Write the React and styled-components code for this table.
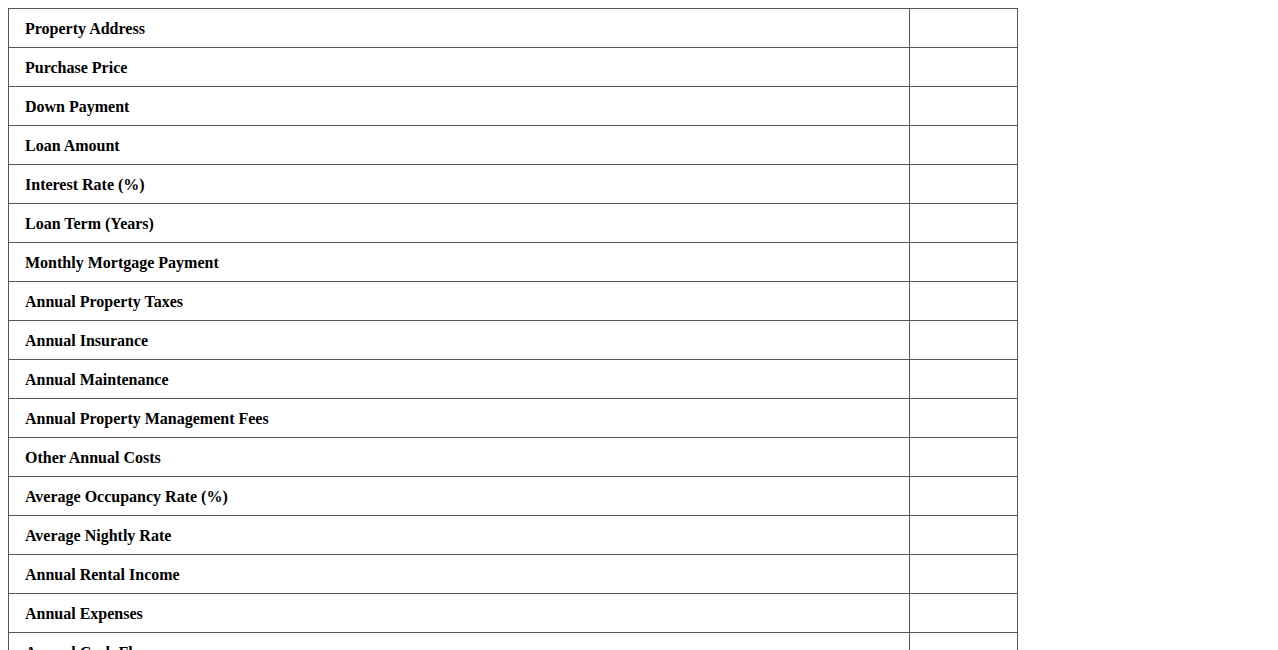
import React from 'react'
import styled, { createGlobalStyle } from 'styled-components'

const GlobalStyle = createGlobalStyle`
  body {
    margin: 8px;
    font-family: "Liberation Serif", "Times New Roman", serif;
    background: #fff;
    color: #000;
  }
`

const rows = [
  'Property Address',
  'Purchase Price',
  'Down Payment',
  'Loan Amount',
  'Interest Rate (%)',
  'Loan Term (Years)',
  'Monthly Mortgage Payment',
  'Annual Property Taxes',
  'Annual Insurance',
  'Annual Maintenance',
  'Annual Property Management Fees',
  'Other Annual Costs',
  'Average Occupancy Rate (%)',
  'Average Nightly Rate',
  'Annual Rental Income',
  'Annual Expenses',
  'Annual Cash Flow',
  'Cash on Cash Return (%)',
]

function App() {
  return (
    <>
      <GlobalStyle />
      <Table>
        <tbody>
          {rows.map((label) => (
            <tr key={label}>
              <Label>{label}</Label>
              <Value></Value>
            </tr>
          ))}
        </tbody>
      </Table>
    </>
  )
}

const Table = styled.table`
  width: 1010px;
  border-collapse: collapse;
  table-layout: fixed;
`

const Label = styled.th`
  width: 868px;
  border: 1px solid #555;
  padding: 11px 16px 9px;
  text-align: left;
  font-size: 16px;
  font-weight: bold;
  line-height: 18px;
`

const Value = styled.td`
  border: 1px solid #555;
  padding: 11px 16px 9px;
  font-size: 16px;
  line-height: 18px;
`

export default App
